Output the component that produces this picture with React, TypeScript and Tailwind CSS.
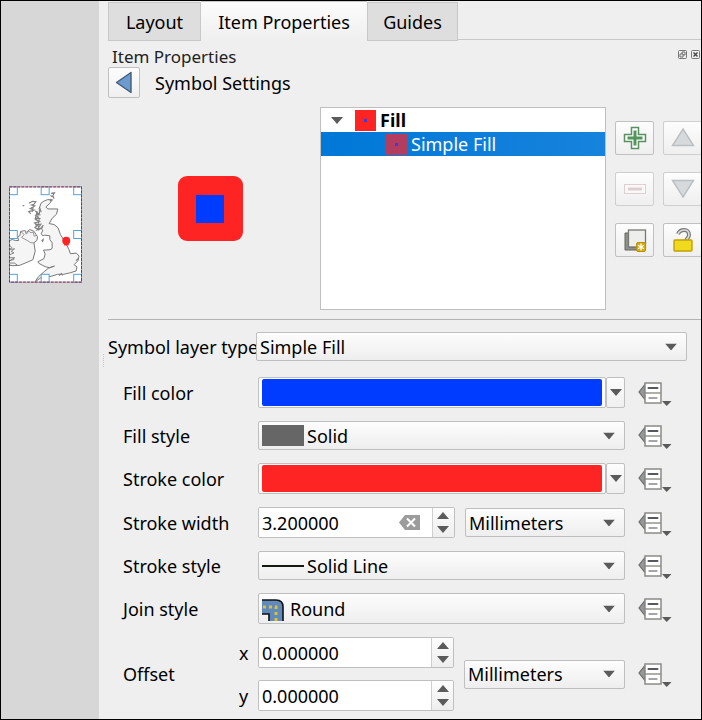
import type { ReactNode } from "react";

const BUTTON =
  "rounded-[2px] border border-[#c0c0c0] bg-linear-to-b from-[#fdfdfd] to-[#efefef]";
const FIELD =
  "w-full min-w-0 appearance-none rounded-[2px] border border-[#bfbfbf] bg-linear-to-b from-[#fdfdfd] to-[#eeeeee] pr-8";
const LABEL = "w-[135px] shrink-0 pl-[15px]";

function Down({ className = "" }: { className?: string }) {
  return (
    <svg viewBox="0 0 12 7" className={`h-[7px] w-3 shrink-0 ${className}`} aria-hidden="true">
      <path d="M0 0H12L6 7Z" fill="#5b5b5b" />
    </svg>
  );
}

function Select({
  id,
  value,
  label,
  size = "h-[29px] pl-[3px]",
  icon,
}: {
  id: string;
  value: string;
  label?: string;
  size?: string;
  icon?: ReactNode;
}) {
  return (
    <div className="relative flex min-w-0 flex-1">
      <select id={id} aria-label={label} className={`${FIELD} ${size}`}>
        <option>{value}</option>
      </select>
      {icon && <span className="pointer-events-none absolute inset-y-0 left-1 flex items-center">{icon}</span>}
      <Down className="pointer-events-none absolute top-1/2 right-[10px] -translate-y-1/2" />
    </div>
  );
}

function Override({ name }: { name: string }) {
  return (
    <button type="button" aria-label={`Data defined override for ${name}`} className="ml-[13px] h-[26px] w-[34px] shrink-0">
      <svg viewBox="0 0 34 26" className="h-[26px] w-[34px]">
        <path d="M7 4.5V19.5L1 12Z" fill="#959799" stroke="#6b6c6c" strokeWidth="1.2" />
        <rect x="7" y="3" width="16" height="20" fill="#fff" stroke="#8b8b87" strokeWidth="1.5" />
        <path d="M7 13H23" stroke="#8b8b87" strokeWidth="1.4" />
        <path d="M10.5 8H19.5" stroke="#55585c" strokeWidth="2" strokeLinecap="round" />
        <path d="M11 18H19" stroke="#85888b" strokeWidth="1.3" strokeLinecap="round" />
        <path d="M24 21H33.5L28.7 26Z" fill="#5b5b5b" />
      </svg>
    </button>
  );
}

function ColorPicker({ id, name, fill }: { id: string; name: string; fill: string }) {
  return (
    <div className="flex h-[31px] min-w-0 flex-1">
      <button id={id} type="button" aria-label={name} className="min-w-0 flex-1 rounded-[2px] border border-[#c0c0c0] bg-[#fbfbfb] px-[3px] py-px">
        <span className={`block h-[27px] rounded-[2px] ${fill}`} />
      </button>
      <button type="button" aria-label={`${name} menu`} className={`flex w-[19px] items-center justify-center ${BUTTON}`}>
        <Down />
      </button>
    </div>
  );
}

function Spin({ id, value, label, clear }: { id: string; value: string; label?: string; clear?: boolean }) {
  return (
    <div className="flex h-[31px] min-w-0 flex-[196] overflow-hidden rounded-[2px] border border-[#bfbfbf] bg-white">
      <input id={id} aria-label={label} defaultValue={value} className="w-0 min-w-0 flex-1 bg-white pl-[3px] outline-none" />
      {clear && (
        <button type="button" aria-label="Clear value" className="mr-3 shrink-0">
          <svg viewBox="0 0 21 15" className="h-[15px] w-[21px]">
            <path d="M0 7.5L6 0H21V15H6Z" fill="#9c9c9c" />
            <path d="M8 3.5L16 11.5M16 3.5L8 11.5" stroke="#fff" strokeWidth="2" />
          </svg>
        </button>
      )}
      <span className="flex w-[22px] shrink-0 flex-col items-center justify-center gap-[7px] border-l border-[#cfcfcf] bg-linear-to-b from-[#fdfdfd] to-[#eeeeee]">
        <button type="button" aria-label="Increase" className="flex">
          <Down className="rotate-180" />
        </button>
        <button type="button" aria-label="Decrease" className="flex">
          <Down />
        </button>
      </span>
    </div>
  );
}

function Row({ id, label, children }: { id: string; label: string; children: ReactNode }) {
  return (
    <div className="flex items-center">
      <label htmlFor={id} className={LABEL}>
        {label}
      </label>
      {/* spacer column shared with the x / y captions */}
      <span className="w-[15px] shrink-0" />
      {children}
      <Override name={label} />
    </div>
  );
}

function Tool({ name, children, disabled }: { name: string; children: ReactNode; disabled?: boolean }) {
  return (
    <button
      type="button"
      aria-label={name}
      disabled={disabled}
      className={`flex h-[34px] w-[39px] items-center justify-center ${BUTTON} disabled:border-[#cfcfcf]`}
    >
      <svg viewBox="0 0 24 24" className="size-6">
        {children}
      </svg>
    </button>
  );
}

function MapThumb() {
  const handles = [
    [29, 49], [125, 49], [223, 49],
    [29, 181], [223, 181],
    [29, 313], [125, 313], [223, 313],
  ];
  return (
    <svg viewBox="28 48 220 290" className="h-[97px] w-[73px]" role="img" aria-label="Map item">
      <rect x="28" y="48" width="220" height="290" fill="#fff" />
      <g fill="#f5f5f5" stroke="#777" strokeWidth="3" strokeLinejoin="round">
        <path d="M119 114L125 98L134 92L144 88L159 88L151 99L139 110L145 116L175 116L171 132L158 144L149 160L164 163L176 173L183 193L198 218L209 239L213 251L231 249L239 258L236 272L224 284L233 291L230 303L214 308L192 313L174 313L155 319L140 321L124 323L112 332L105 338L116 321L134 305L146 295L165 288L150 293L137 290L118 280L115 275L133 266L137 252L132 240L152 239L158 235L158 218L151 208L151 197L135 195L130 197L125 191L130 180L126 177L131 165L119 178L115 164L119 148L112 141L120 129Z" />
        <path d="M28 212L38 208L47 211L57 211L54 200L61 196L63 184L75 181L81 186L90 178L103 183L114 200L112 211L103 218L107 243L100 269L82 277L60 286L40 287L28 285" />
      </g>
      <path d="M63 184L74 193L66 202L83 211L94 218L103 218M76 181L80 192L88 183L94 188L101 186L104 198L111 196" fill="none" stroke="#858585" strokeWidth="2.5" />
      <path d="M88 99L99 93L109 94L103 102L96 104L106 107L92 115L104 119L87 124L94 131M94 113L101 110L98 125M107 122L118 130L108 135L117 141L108 148L120 154L105 158L115 165L106 172L119 180M113 123L107 145L123 145M109 130L123 134M107 164L124 162L112 179L127 174M120 111L125 126M155 69L165 67L160 76L164 85M153 75L159 80M151 91L157 91M126 212L131 208L129 216M179 317L186 311L190 316M69 106L74 106M237 265L230 272" fill="none" stroke="#808080" strokeWidth="3.4" />
      <path d="M28 224L37 233L30 238L45 236L34 244L43 248L29 255M31 263L45 263L30 272L44 268M29 279L44 279L53 285" fill="none" stroke="#7c7c7c" strokeWidth="2.8" />
      <rect x="194" y="216" width="14" height="10" fill="#ff2424" />
      <circle cx="200.5" cy="212" r="12" fill="#ff2424" />
      {handles.map(([x, y]) => (
        <rect key={`${x}-${y}`} x={x} y={y} width="24" height="24" fill="#fff" stroke="#55a3d2" strokeWidth="3" />
      ))}
      <rect x="29.5" y="49.5" width="217" height="287" fill="none" stroke="#a493a5" strokeWidth="3" />
      <rect x="29.5" y="49.5" width="217" height="287" fill="none" stroke="#832c55" strokeWidth="3" strokeDasharray="8 4" />
    </svg>
  );
}

function Swatch({ className }: { className: string }) {
  return (
    <span className={`flex size-[21px] shrink-0 items-center justify-center ${className}`}>
      <span className="size-[3px] bg-[#3c3cdc]" />
    </span>
  );
}

export default function App() {
  return (
    <div className="flex min-h-screen overflow-hidden border border-black bg-[#efefef] font-['Noto_Sans',sans-serif] text-[18px] leading-6 text-black">
      <aside className="w-[98px] shrink-0 bg-[#d7d7d7] pt-[185px] pl-2">
        <MapThumb />
      </aside>

      <div className="flex w-[9px] shrink-0 items-center justify-center" aria-hidden="true">
        <span className="h-[13px] border-l border-dotted border-[#c4c4c4]" />
      </div>

      <main className="min-w-0 flex-1 overflow-hidden">
        <div role="tablist" className="flex h-10 items-stretch">
          <button type="button" role="tab" aria-selected="false" className="mt-px w-[93px] border border-[#c8c8c8] bg-[#dedede] pt-px">
            Layout
          </button>
          <button type="button" role="tab" aria-selected="true" className="w-[166px] border-t border-[#c8c8c8] bg-linear-to-b from-[#fcfcfc] to-[#efefef]">
            Item Properties
          </button>
          <button type="button" role="tab" aria-selected="false" className="mt-px w-[91px] border border-[#c8c8c8] bg-[#dedede] pt-px">
            Guides
          </button>
          <span className="mb-px flex-1 border-b border-[#c8c8c8]" />
        </div>

        <div className="flex h-[26px] items-center justify-between pt-[5px] pl-1">
          <h1 className="text-[17px] text-[#222]">Item Properties</h1>
          <div className="mb-1 flex gap-1 pr-px">
            <button type="button" aria-label="Float panel" className="flex">
              <svg viewBox="0 0 9 9" className="size-[9px]" fill="none" stroke="#777">
                <rect x=".5" y=".5" width="8" height="8" rx="1" />
                <path d="M4 4V2H7V5H5M2 4H5V7H2Z" stroke="#555" strokeWidth=".8" />
              </svg>
            </button>
            <button type="button" aria-label="Close panel" className="flex">
              <svg viewBox="0 0 9 9" className="size-[9px]" fill="none" stroke="#777">
                <rect x=".5" y=".5" width="8" height="8" rx="1" />
                <path d="M2.5 2.5L6.5 6.5M6.5 2.5L2.5 6.5" stroke="#444" strokeWidth="1.4" />
              </svg>
            </button>
          </div>
        </div>

        <div className="flex items-center gap-[15px]">
          <button type="button" aria-label="Back" className={`flex h-[31px] w-8 items-center justify-center ${BUTTON}`}>
            <svg viewBox="0 0 18 23" className="h-[23px] w-[18px]">
              <path d="M16 1.5V21.5L1.5 11.5Z" fill="#6d9bcd" stroke="#425b78" strokeWidth="1.4" strokeLinejoin="round" />
            </svg>
          </button>
          <h2>Symbol Settings</h2>
        </div>

        <div className="mt-[9px] flex h-[203px]">
          <div className="flex w-[212px] shrink-0 items-center justify-center pr-2">
            <div className="flex size-[65px] items-center justify-center rounded-[9px] bg-[#ff2424]">
              <div className="size-7 bg-[#003cff]" />
            </div>
          </div>
          <ul role="tree" aria-label="Symbol layers" className="min-w-0 flex-1 border border-[#bfbfbf] bg-white">
            <li role="treeitem" aria-expanded="true" aria-selected="false">
              <div className="flex h-6 items-center pl-[10px] font-bold">
                <Down />
                <Swatch className="mr-1 ml-3 bg-[#ff2424]" />
                Fill
              </div>
              <ul role="group">
                <li role="treeitem" aria-selected="true" className="flex h-6 items-center bg-linear-to-r from-[#0078d7] to-[#1683dd] pl-[65px] text-white">
                  <Swatch className="mr-1 bg-[#b33d5e]" />
                  Simple Fill
                </li>
              </ul>
            </li>
          </ul>
          <div className="-mr-px ml-[9px] grid w-[87px] shrink-0 grid-cols-[39px_39px] content-start gap-x-[9px] gap-y-[17px] pt-[14px]">
            <Tool name="Add symbol layer">
              <path d="M8.5 1.5H15.5V8.5H22.5V15.5H15.5V22.5H8.5V15.5H1.5V8.5H8.5Z" fill="#fff" stroke="#589060" strokeWidth="1.5" />
              <path d="M12 4.5V19.5M4.5 12H19.5" stroke="#53945a" strokeWidth="3" />
            </Tool>
            <Tool name="Move up" disabled>
              <path d="M12 3L22.5 19.5H1.5Z" fill="#d7dadd" stroke="#b9bec2" strokeWidth="1.4" />
            </Tool>
            <Tool name="Remove symbol layer" disabled>
              <rect x="1.5" y="7.5" width="21" height="9" fill="#fbf8f8" stroke="#dfcfd1" />
              <rect x="5" y="10.5" width="14" height="3" fill="#dfcfd1" />
            </Tool>
            <Tool name="Move down" disabled>
              <path d="M12 20L22.5 3.5H1.5Z" fill="#d7dadd" stroke="#b9bec2" strokeWidth="1.4" />
            </Tool>
            <Tool name="Duplicate symbol layer">
              <path d="M2 5H6V19H19V22H2Z" fill="#8f918b" stroke="#62645e" />
              <rect x="5.5" y="2" width="17" height="17" fill="#eeeeec" stroke="#777973" strokeWidth="1.3" />
              <rect x="13.5" y="14.5" width="9" height="9" rx="1.5" fill="#d6a90d" stroke="#b9910c" />
              <path d="M18 15.5V22.5M15 17.3L21 20.7M21 17.3L15 20.7" stroke="#fff" strokeWidth="1.3" />
            </Tool>
            <Tool name="Lock layer color">
              <path d="M7 6C9 1 18 0 18 7C18 10 15 11 15 13" fill="none" stroke="#777" strokeWidth="4" />
              <path d="M7 6C9 1 18 0 18 7C18 10 15 11 15 13" fill="none" stroke="#ddd" strokeWidth="1.6" />
              <rect x="3" y="12" width="18" height="11" rx="1" fill="#f0da1f" stroke="#c4a000" strokeWidth="1.4" />
            </Tool>
          </div>
        </div>

        <hr className="mt-[9px] border-[#b4b4b4]" />

        <div className="mt-3 flex items-center pr-[14px]">
          <label htmlFor="layer-type" className="w-[148px] shrink-0 whitespace-nowrap">
            Symbol layer type
          </label>
          <Select id="layer-type" value="Simple Fill" />
        </div>

        <form className="mt-4 flex flex-col gap-[13px] pr-[29px] pb-2">
          <Row id="fill-color" label="Fill color">
            <ColorPicker id="fill-color" name="Fill color" fill="bg-[#003cff]" />
          </Row>
          <Row id="fill-style" label="Fill style">
            <Select id="fill-style" value="Solid" size="h-[29px] pl-12" icon={<span className="h-[21px] w-[42px] bg-[#666]" />} />
          </Row>
          <Row id="stroke-color" label="Stroke color">
            <ColorPicker id="stroke-color" name="Stroke color" fill="bg-[#ff2424]" />
          </Row>
          <Row id="stroke-width" label="Stroke width">
            <div className="flex min-w-0 flex-1 items-center gap-[10px]">
              <Spin id="stroke-width" value="3.200000" clear />
              <div className="flex min-w-0 flex-[161]">
                <Select id="stroke-unit" label="Stroke width unit" value="Millimeters" />
              </div>
            </div>
          </Row>
          <Row id="stroke-style" label="Stroke style">
            <Select id="stroke-style" value="Solid Line" size="h-[29px] pl-12" icon={<span className="h-[2px] w-[42px] bg-[#151a10]" />} />
          </Row>
          <Row id="join-style" label="Join style">
            <Select
              id="join-style"
              value="Round"
              size="h-[31px] pl-[31px]"
              icon={
                <svg viewBox="0 0 22 22" className="mt-[3px] size-[22px]">
                  <path d="M0 1H14Q21 1 21 8V22H7V15H0Z" fill="#6189bb" />
                  <path d="M0 1H14Q21 1 21 8V22M0 15H7V22" fill="none" stroke="#111" strokeWidth="1.6" />
                  <path d="M1 8H14V22" fill="none" stroke="#dcc425" strokeWidth="3" strokeDasharray="3 3" />
                </svg>
              }
            />
          </Row>
          <div className="flex items-center">
            <span className="w-[131px] shrink-0 pl-[15px]">Offset</span>
            <div className="flex min-w-0 flex-1 items-center gap-[10px]">
              <div className="flex min-w-0 flex-[215] flex-col gap-3">
                <div className="flex items-center">
                  <label htmlFor="offset-x" className="w-[19px] shrink-0">x</label>
                  <Spin id="offset-x" value="0.000000" />
                </div>
                <div className="flex items-center">
                  <label htmlFor="offset-y" className="w-[19px] shrink-0">y</label>
                  <Spin id="offset-y" value="0.000000" />
                </div>
              </div>
              <div className="flex min-w-0 flex-[161]">
                <Select id="offset-unit" label="Offset unit" value="Millimeters" />
              </div>
            </div>
            <Override name="Offset" />
          </div>
        </form>
      </main>
    </div>
  );
}
